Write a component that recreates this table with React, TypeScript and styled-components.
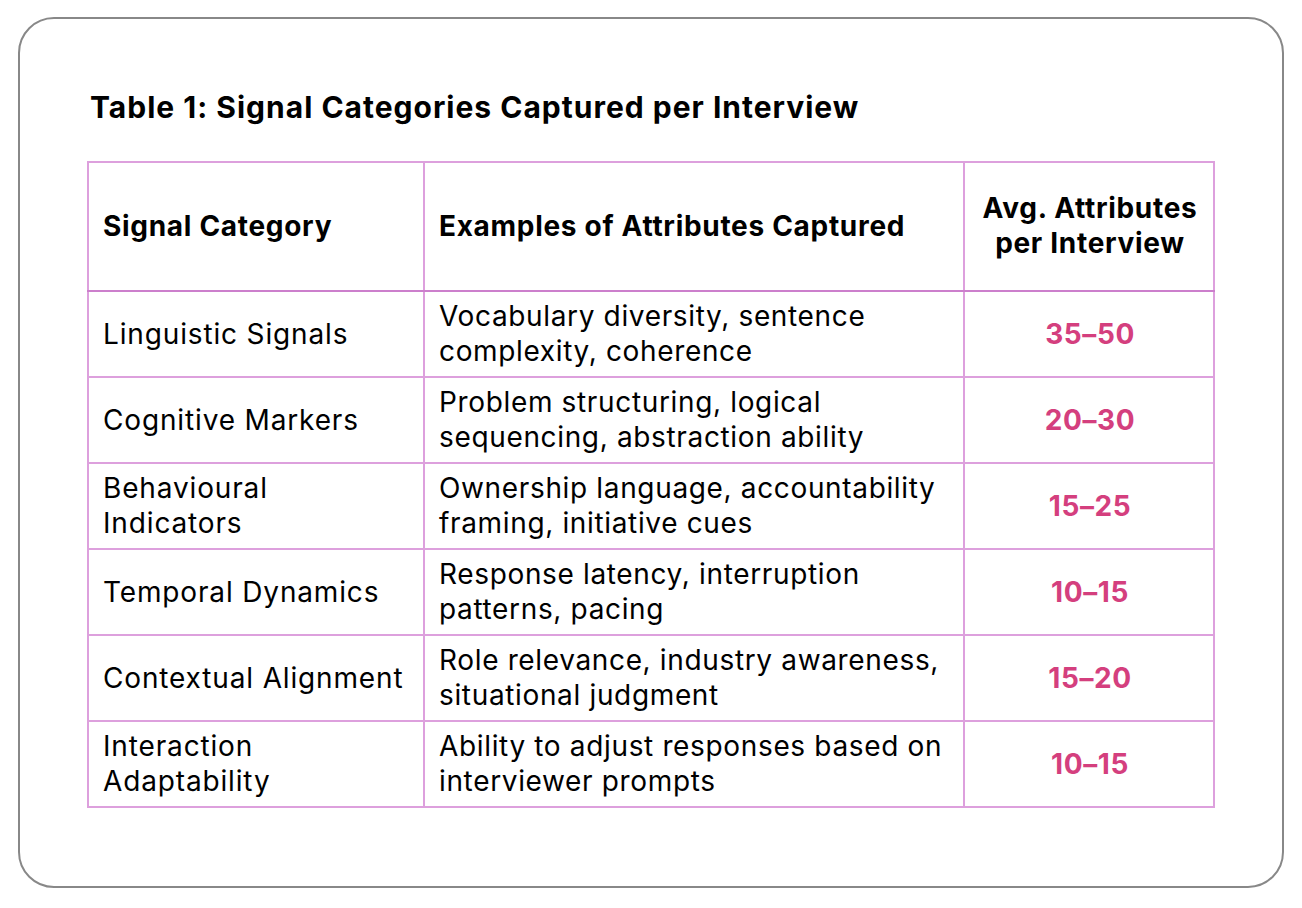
import React from "react";
import styled, { createGlobalStyle } from "styled-components";

const GlobalStyle = createGlobalStyle`
  html, body {
    margin: 0;
    padding: 0;
    background: #ffffff;
  }
  body {
    font-family: Inter, "Noto Sans", "Liberation Sans", sans-serif;
    color: #000000;
  }
`;

const rows = [
  {
    category: "Linguistic Signals",
    examples: "Vocabulary diversity, sentence complexity, coherence",
    avg: "35–50",
  },
  {
    category: "Cognitive Markers",
    examples: "Problem structuring, logical sequencing, abstraction ability",
    avg: "20–30",
  },
  {
    category: "Behavioural Indicators",
    examples: "Ownership language, accountability framing, initiative cues",
    avg: "15–25",
  },
  {
    category: "Temporal Dynamics",
    examples: "Response latency, interruption patterns, pacing",
    avg: "10–15",
  },
  {
    category: "Contextual Alignment",
    examples: "Role relevance, industry awareness, situational judgment",
    avg: "15–20",
  },
  {
    category: "Interaction Adaptability",
    examples: "Ability to adjust responses based on interviewer prompts",
    avg: "10–15",
  },
];

function App() {
  return (
    <Page>
      <GlobalStyle />
      <Card>
        <Title>Table 1: Signal Categories Captured per Interview</Title>
        <Table>
          <colgroup>
            <col style={{ width: 336 }} />
            <col style={{ width: 540 }} />
            <col style={{ width: 250 }} />
          </colgroup>
          <thead>
            <tr>
              <HeadCell>Signal Category</HeadCell>
              <HeadCell>Examples of Attributes Captured</HeadCell>
              <HeadCell $center>Avg. Attributes per Interview</HeadCell>
            </tr>
          </thead>
          <tbody>
            {rows.map((row) => (
              <tr key={row.category}>
                <CategoryCell>{row.category}</CategoryCell>
                <Cell>{row.examples}</Cell>
                <NumberCell>{row.avg}</NumberCell>
              </tr>
            ))}
          </tbody>
        </Table>
      </Card>
    </Page>
  );
}

const Page = styled.div`
  width: 1302px;
  height: 908px;
  padding: 17px 18px;
  box-sizing: border-box;
`;

const Card = styled.div`
  box-sizing: border-box;
  width: 1266px;
  height: 871px;
  border: 2px solid #888888;
  border-radius: 36px;
  padding: 68px 67px 0 67px;
`;

const Title = styled.h1`
  margin: 0 0 34px 3px;
  font-size: 30px;
  line-height: 40px;
  font-weight: 700;
  letter-spacing: 1px;
`;

const Table = styled.table`
  border-collapse: collapse;
  table-layout: fixed;
  width: 1128px;
  border: 2px solid #dda0dd;
`;

const HeadCell = styled.th<{ $center?: boolean }>`
  border: 2px solid #dda0dd;
  border-bottom-color: #cc7fcc;
  padding: 28px 12px 29px 14px;
  height: 70px;
  font-size: 28px;
  line-height: 35px;
  font-weight: 700;
  letter-spacing: 0.7px;
  text-align: ${(props) => (props.$center ? "center" : "left")};
  vertical-align: middle;
`;

const Cell = styled.td`
  border: 2px solid #dda0dd;
  padding: 7px 12px 7px 14px;
  font-size: 28px;
  line-height: 35px;
  font-weight: 400;
  letter-spacing: 0.65px;
  vertical-align: middle;
`;

const CategoryCell = styled(Cell)`
  padding-right: 16px;
  letter-spacing: 0.85px;
`;

const NumberCell = styled(Cell)`
  text-align: center;
  font-weight: 700;
  letter-spacing: 0.6px;
  color: #d43f7e;
`;

export default App;
